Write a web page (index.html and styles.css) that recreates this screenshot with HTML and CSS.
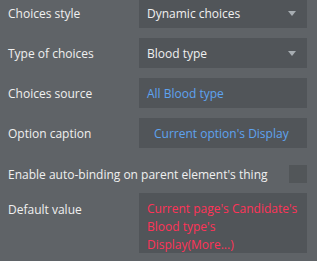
FILE: index.html
```html
<!DOCTYPE html>
<html>
<head>
<meta charset="utf-8">
<link rel="stylesheet" href="styles.css">
</head>
<body>
<div class="panel">
  <div class="row">
    <div class="label">Choices style</div>
    <div class="field dropdown"><span>Dynamic choices</span><span class="caret"></span></div>
  </div>
  <div class="row">
    <div class="label">Type of choices</div>
    <div class="field dropdown"><span>Blood type</span><span class="caret"></span></div>
  </div>
  <div class="row">
    <div class="label">Choices source</div>
    <div class="field blue">All Blood type</div>
  </div>
  <div class="row">
    <div class="label">Option caption</div>
    <div class="field blue caption">Current option's Display</div>
  </div>
  <div class="row check-row">
    <div class="label">Enable auto-binding on parent element's thing</div>
    <div class="checkbox"></div>
  </div>
  <div class="row top-row">
    <div class="label">Default value</div>
    <div class="field red multi">Current page's Candidate's Blood type's Display(More...)</div>
  </div>
</div>
</body>
</html>
```
FILE: styles.css
```css
html, body {
  margin: 0;
  padding: 0;
  background: #5f6367;
}
body {
  font-family: "Open Sans", "DejaVu Sans", sans-serif;
  font-size: 12px;
  color: #f0f0f0;
  width: 317px;
  height: 261px;
  overflow: hidden;
}
.panel {
  margin-top: -2px;
  padding: 0 10px 0 8px;
  display: flex;
  flex-direction: column;
  gap: 10px;
}
.row {
  display: flex;
  align-items: center;
  justify-content: space-between;
}
.label {
  white-space: nowrap;
}
.field {
  box-sizing: border-box;
  width: 168px;
  height: 30px;
  background: #515559;
  padding: 0 11px 0 8px;
  display: flex;
  align-items: center;
  justify-content: space-between;
  white-space: nowrap;
  overflow: hidden;
}
.caret {
  width: 0;
  height: 0;
  border-left: 4px solid transparent;
  border-right: 4px solid transparent;
  border-top: 5px solid #a7adb2;
}
.blue {
  color: #5ea3f0;
}
.caption {
  padding-left: 15px;
}
.red {
  color: #ff3358;
}
.check-row {
  margin-top: 7px;
}
.checkbox {
  width: 18px;
  height: 18px;
  background: #525659;
}
.top-row {
  align-items: flex-start;
}
.top-row .label {
  padding-top: 8px;
}
.multi {
  display: block;
  height: 60px;
  white-space: normal;
  padding: 7px 2px 0 8px;
  line-height: 18px;
}
```
